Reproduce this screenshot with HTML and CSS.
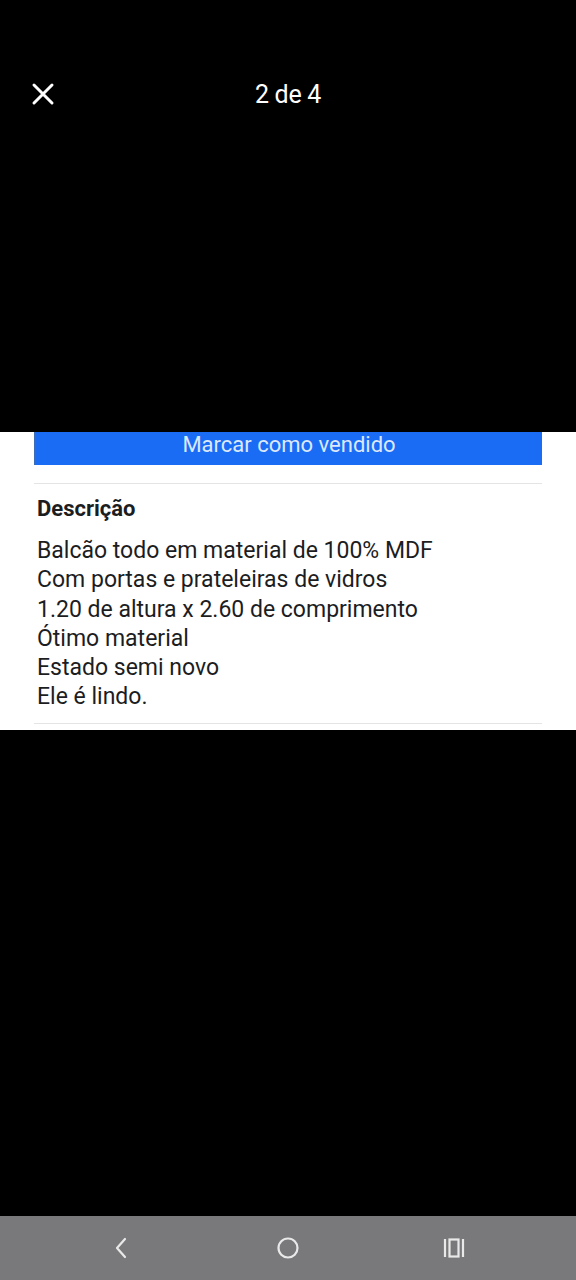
FILE: index.html
```html
<!DOCTYPE html>
<html lang="pt-BR">
<head>
    <meta charset="UTF-8">
    <meta name="viewport" content="width=device-width, initial-scale=1.0">
    <title>2 de 4</title>
    <link rel="stylesheet" href="styles.css">
</head>
<body>
    <div class="screen">
        <header class="viewer-bar">
            <button class="close-btn" aria-label="Fechar">
                <svg width="24" height="24" viewBox="0 0 24 24">
                    <path d="M3 3 L21 21 M21 3 L3 21" stroke="#fff" stroke-width="3" stroke-linecap="round" fill="none"/>
                </svg>
            </button>
            <span class="counter">2 de 4</span>
        </header>

        <div class="photo-area">
            <div class="shot">
                <button class="sold-btn">Marcar como vendido</button>
                <hr class="divider">
                <h2 class="desc-title">Descrição</h2>
                <p class="desc-text">Balcão todo em material de 100% MDF<br>Com portas e prateleiras de vidros<br>1.20 de altura x 2.60 de comprimento<br>Ótimo material<br>Estado semi novo<br>Ele é lindo.</p>
                <hr class="divider last">
            </div>
        </div>

        <nav class="nav-bar">
            <svg width="24" height="24" viewBox="0 0 24 24">
                <path d="M15 3 L7 12 L15 21" stroke="#e9e9e9" stroke-width="2.2" fill="none" stroke-linecap="round" stroke-linejoin="round"/>
            </svg>
            <svg width="24" height="24" viewBox="0 0 24 24">
                <circle cx="12" cy="12" r="9.5" stroke="#e9e9e9" stroke-width="2.2" fill="none"/>
            </svg>
            <svg width="24" height="24" viewBox="0 0 24 24">
                <path d="M3 3 V21 M21 3 V21" stroke="#e9e9e9" stroke-width="2.2" fill="none"/>
                <rect x="7.5" y="3.5" width="9" height="17" stroke="#e9e9e9" stroke-width="2.2" fill="none"/>
            </svg>
        </nav>
    </div>
</body>
</html>
```

FILE: styles.css
```css
body {
    margin: 0;
    background-color: #000;
    font-family: Roboto, "Noto Sans", sans-serif;
}

.screen {
    display: flex;
    flex-direction: column;
    height: 1280px;
}

.viewer-bar {
    height: 188px;
    display: flex;
    align-items: center;
    justify-content: center;
    position: relative;
}

.close-btn {
    position: absolute;
    left: 31px;
    top: 82px;
    background: none;
    border: none;
    padding: 0;
    width: 24px;
    height: 24px;
}

.counter {
    color: #fff;
    font-size: 25px;
    letter-spacing: -0.3px;
}

.photo-area {
    flex: 1;
    padding-top: 244px;
}

.shot {
    background-color: #fff;
    height: 298px;
    overflow: hidden;
    padding: 0 34px;
}

.sold-btn {
    display: flex;
    justify-content: center;
    align-items: flex-start;
    width: 100%;
    height: 33px;
    background-color: #1a6cf4;
    color: #dce8ff;
    border: none;
    border-left: 2px solid #3b6cb8;
    font-family: Roboto, sans-serif;
    font-size: 22px;
    line-height: normal;
    padding: 0;
}

.divider {
    border: none;
    border-top: 1px solid #e4e4e6;
    margin: 18px 0 0;
}

.desc-title {
    margin: 12px 0 0 3px;
    font-size: 22px;
    font-weight: bold;
    color: #1c1d1f;
    line-height: 26px;
}

.desc-text {
    margin: 14px 0 0 3px;
    font-size: 23px;
    line-height: 29.3px;
    color: #1c1d1f;
}

.divider.last {
    margin-top: 11px;
}

.nav-bar {
    height: 64px;
    background-color: #79797b;
    display: flex;
    align-items: center;
    justify-content: space-between;
    padding: 0 110px 0 110px;
}
```
